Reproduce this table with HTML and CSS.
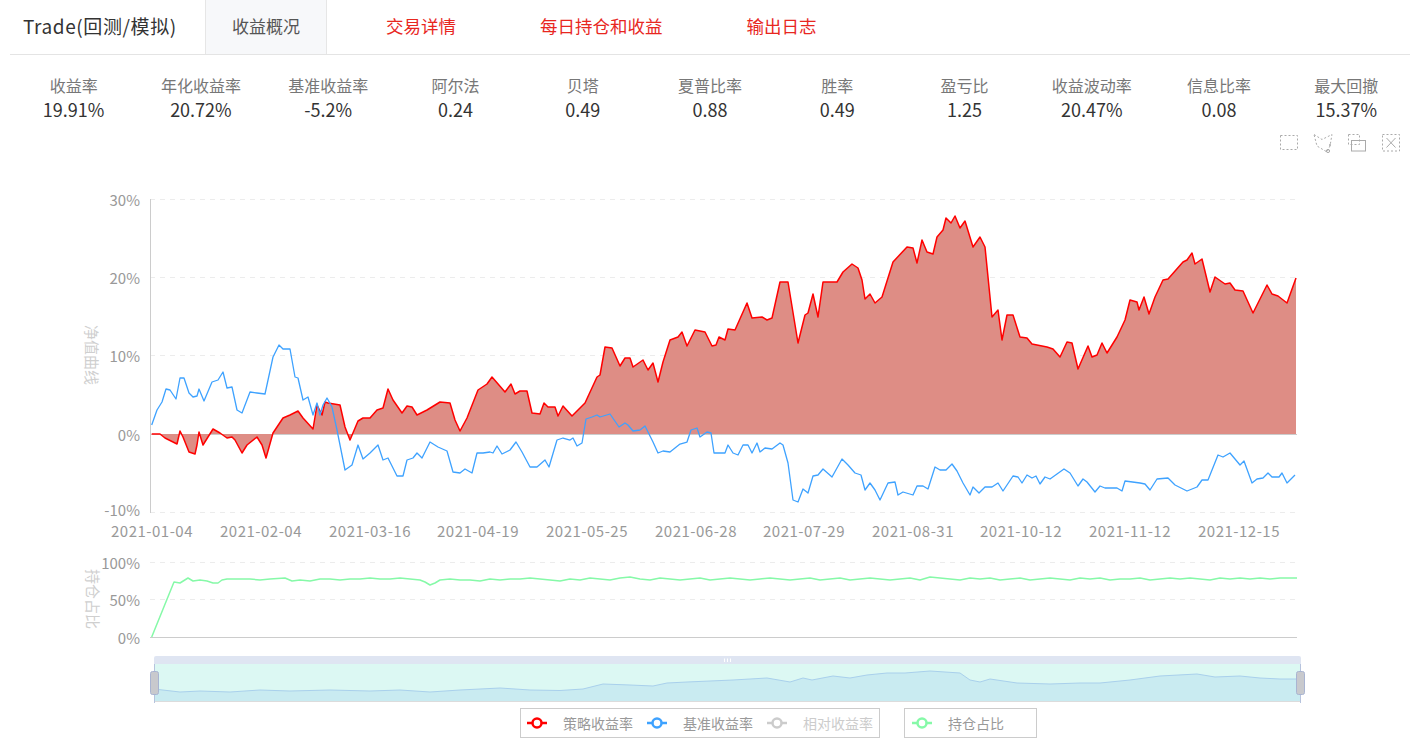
FILE: index.html
```html
<!DOCTYPE html>
<html lang="zh-CN">
<head>
<meta charset="utf-8">
<title>Trade(回测/模拟)</title>
<link rel="stylesheet" href="styles.css">
</head>
<body>
<div class="tabs">
  <div class="tab tab-title">Trade(回测/模拟)</div>
  <div class="tab tab-active">收益概况</div>
  <div class="tab tab-link tab-first">交易详情</div>
  <div class="tab tab-link">每日持仓和收益</div>
  <div class="tab tab-link">输出日志</div>
</div>

<div class="metrics">
  <div class="metric"><div class="m-label">收益率</div><div class="m-value">19.91%</div></div>
  <div class="metric"><div class="m-label">年化收益率</div><div class="m-value">20.72%</div></div>
  <div class="metric"><div class="m-label">基准收益率</div><div class="m-value">-5.2%</div></div>
  <div class="metric"><div class="m-label">阿尔法</div><div class="m-value">0.24</div></div>
  <div class="metric"><div class="m-label">贝塔</div><div class="m-value">0.49</div></div>
  <div class="metric"><div class="m-label">夏普比率</div><div class="m-value">0.88</div></div>
  <div class="metric"><div class="m-label">胜率</div><div class="m-value">0.49</div></div>
  <div class="metric"><div class="m-label">盈亏比</div><div class="m-value">1.25</div></div>
  <div class="metric"><div class="m-label">收益波动率</div><div class="m-value">20.47%</div></div>
  <div class="metric"><div class="m-label">信息比率</div><div class="m-value">0.08</div></div>
  <div class="metric"><div class="m-label">最大回撤</div><div class="m-value">15.37%</div></div>
</div>

<div class="toolbox">
  <svg class="tool" viewBox="0 0 20 20"><rect x="1.5" y="2.5" width="17" height="14" fill="none" stroke="#aaa" stroke-dasharray="2 2"/></svg>
  <svg class="tool" viewBox="0 0 20 20"><path d="M1 1.5 L9 6.5 L19 1.5 L17 13 L14 19 L4 13 Z" fill="none" stroke="#aaa" stroke-dasharray="2 2"/><circle cx="15" cy="18" r="1.6" fill="none" stroke="#aaa"/><circle cx="17" cy="12" r="1" fill="#aaa"/></svg>
  <svg class="tool" viewBox="0 0 20 20"><rect x="1.5" y="1.5" width="11" height="10" fill="none" stroke="#aaa" stroke-dasharray="2 2"/><rect x="4.5" y="7.5" width="14" height="10.5" fill="none" stroke="#aaa"/></svg>
  <svg class="tool" viewBox="0 0 20 20"><rect x="1.5" y="1.5" width="17" height="16.5" fill="none" stroke="#aaa" stroke-dasharray="2 2"/><path d="M5.5 5 L14.5 14.5 M14.5 5 L5.5 14.5" stroke="#aaa" fill="none"/></svg>
</div>

<svg class="chart" width="1410" height="552" viewBox="0 153 1410 552">
  <g class="grid">
    <line x1="150" y1="199.5" x2="1297" y2="199.5"/>
    <line x1="150" y1="277.5" x2="1297" y2="277.5"/>
    <line x1="150" y1="355.5" x2="1297" y2="355.5"/>
    <line x1="150" y1="512.5" x2="1297" y2="512.5"/>
    <line x1="150" y1="562.5" x2="1297" y2="562.5"/>
    <line x1="150" y1="599.5" x2="1297" y2="599.5"/>
  </g>
  <g class="axis">
    <line x1="150.5" y1="199" x2="150.5" y2="513"/>
    <line x1="150" y1="434.5" x2="1297" y2="434.5"/>
    <line x1="150" y1="637.5" x2="1297" y2="637.5"/>
  </g>
  <g class="ylabels">
    <text x="140" y="199">30%</text>
    <text x="140" y="277">20%</text>
    <text x="140" y="355">10%</text>
    <text x="140" y="434">0%</text>
    <text x="140" y="509.5">-10%</text>
    <text x="140" y="562">100%</text>
    <text x="140" y="599">50%</text>
    <text x="140" y="637">0%</text>
  </g>
  <text class="axis-name" transform="translate(92 355) rotate(90)">净值曲线</text>
  <text class="axis-name" transform="translate(93 599) rotate(90)">持仓占比</text>
  <g class="xlabels">
    <text x="152" y="530">2021-01-04</text>
    <text x="261" y="530">2021-02-04</text>
    <text x="370" y="530">2021-03-16</text>
    <text x="478" y="530">2021-04-19</text>
    <text x="587" y="530">2021-05-25</text>
    <text x="696" y="530">2021-06-28</text>
    <text x="804" y="530">2021-07-29</text>
    <text x="913" y="530">2021-08-31</text>
    <text x="1021" y="530">2021-10-12</text>
    <text x="1130" y="530">2021-11-12</text>
    <text x="1239" y="530">2021-12-15</text>
  </g>

  <polygon class="strat-area" points="151.7,434 160,434 165,438 175,443 177,444 180,431 183,437 189,452 195,454 197,445 199,432 203,445 208,437 213,429 220,433 227,438 232,437 235,440 242,453 247,445 257,437 262,445 266,458 273,433 283,418 290,415 298,411 303,418 313,429 317,405 322,415 325,402 328,403 340,405 345,427 350,440 358,421 363,418 370,418 377,410 383,408 388,389 393,400 402,413 407,406 412,407 417,415 427,410 440,402 450,403 455,420 460,431 467,418 478,390 487,384 492,377 505,392 511,384 515,394 520,391 527,391 532,413 540,414 544,403 548,407 555,407 558,416 563,406 572,416 585,403 597,377 600,375 605,347 612,348 620,366 625,358 630,358 633,367 643,360 648,370 653,363 658,382 663,362 670,340 678,337 682,332 687,346 695,330 705,332 712,346 716,345 719,337 725,340 728,329 735,330 747,303 752,318 762,317 767,320 772,318 780,282 788,282 798,343 805,315 808,313 813,294 818,317 823,282 837,282 843,272 852,264 858,268 862,280 865,299 870,294 875,303 882,297 893,262 907,247 913,248 917,263 922,240 927,252 933,254 937,237 943,230 946,218 951,223 955,216 960,228 965,221 973,247 980,237 985,247 992,317 998,310 1002,340 1007,315 1013,315 1020,337 1027,338 1032,344 1047,347 1053,349 1060,357 1067,342 1072,343 1078,369 1088,346 1092,357 1097,355 1102,343 1107,353 1117,337 1125,320 1130,300 1137,302 1139,310 1144,297 1149,314 1155,297 1163,280 1168,279 1183,262 1187,260 1192,253 1195,264 1202,259 1210,292 1215,277 1225,284 1230,283 1235,290 1243,291 1253,313 1267,285 1272,294 1278,296 1287,303 1296,278 1296,434"/>
  <polyline class="strat-line" points="151.7,434 160,434 165,438 175,443 177,444 180,431 183,437 189,452 195,454 197,445 199,432 203,445 208,437 213,429 220,433 227,438 232,437 235,440 242,453 247,445 257,437 262,445 266,458 273,433 283,418 290,415 298,411 303,418 313,429 317,405 322,415 325,402 328,403 340,405 345,427 350,440 358,421 363,418 370,418 377,410 383,408 388,389 393,400 402,413 407,406 412,407 417,415 427,410 440,402 450,403 455,420 460,431 467,418 478,390 487,384 492,377 505,392 511,384 515,394 520,391 527,391 532,413 540,414 544,403 548,407 555,407 558,416 563,406 572,416 585,403 597,377 600,375 605,347 612,348 620,366 625,358 630,358 633,367 643,360 648,370 653,363 658,382 663,362 670,340 678,337 682,332 687,346 695,330 705,332 712,346 716,345 719,337 725,340 728,329 735,330 747,303 752,318 762,317 767,320 772,318 780,282 788,282 798,343 805,315 808,313 813,294 818,317 823,282 837,282 843,272 852,264 858,268 862,280 865,299 870,294 875,303 882,297 893,262 907,247 913,248 917,263 922,240 927,252 933,254 937,237 943,230 946,218 951,223 955,216 960,228 965,221 973,247 980,237 985,247 992,317 998,310 1002,340 1007,315 1013,315 1020,337 1027,338 1032,344 1047,347 1053,349 1060,357 1067,342 1072,343 1078,369 1088,346 1092,357 1097,355 1102,343 1107,353 1117,337 1125,320 1130,300 1137,302 1139,310 1144,297 1149,314 1155,297 1163,280 1168,279 1183,262 1187,260 1192,253 1195,264 1202,259 1210,292 1215,277 1225,284 1230,283 1235,290 1243,291 1253,313 1267,285 1272,294 1278,296 1287,303 1296,278"/>
  <polyline class="bench-line" points="151.7,425 157,410 162,402 166,389 170,390 176,399 180,378 184,378 189,393 193,397 197,396 199,389 204,401 212,382 218,380 223,372 227,388 232,387 237,410 242,413 250,392 257,393 265,394 273,357 279,345 283,349 290,349 295,377 298,378 303,400 308,397 313,415 317,403 320,415 323,405 327,398 332,407 337,430 345,470 352,465 358,445 363,459 370,453 378,445 383,460 388,458 397,476 403,476 407,460 413,458 417,453 422,458 430,442 438,447 447,451 453,472 460,473 465,469 472,473 477,453 483,453 490,452 493,453 497,446 502,454 510,450 516,442 522,452 530,467 537,467 545,460 549,467 557,440 563,438 570,440 573,438 577,446 582,443 586,419 592,417 597,415 600,417 610,414 619,427 625,423 628,425 633,431 640,430 645,426 653,442 658,453 663,451 670,452 680,444 687,442 691,430 697,428 700,437 707,432 711,433 714,453 725,453 728,445 733,453 738,455 743,445 748,445 752,453 757,443 760,452 765,448 772,449 780,443 783,445 788,463 793,500 798,502 803,489 808,493 813,476 818,475 823,469 832,477 842,459 848,465 855,473 861,475 865,490 870,483 875,490 880,500 888,483 895,482 898,495 903,492 913,495 917,486 923,486 928,489 935,467 940,470 946,470 952,464 957,471 963,483 970,495 973,487 979,493 985,487 992,487 998,483 1003,491 1013,476 1018,477 1022,483 1027,475 1032,478 1036,476 1040,484 1045,477 1050,479 1064,469 1070,473 1078,486 1083,479 1087,482 1095,492 1100,486 1105,488 1117,488 1122,491 1125,481 1140,483 1145,484 1150,490 1157,479 1168,478 1175,485 1187,491 1197,487 1202,480 1208,480 1218,455 1223,457 1230,453 1240,465 1244,461 1252,483 1257,479 1263,478 1268,473 1272,477 1279,477 1282,473 1287,483 1295,475"/>

  <polyline class="pos-line" points="151.7,637 174,582 180,583 188,578 193,581 200,580 207,581 213,583 218,583 222,580 227,579 240,579 250,579 260,580 270,579 285,578 292,581 300,580 310,581 320,579 330,579 340,580 350,579 360,579 370,578 380,579 390,579 400,578 410,579 420,580 425,582 430,585 435,583 440,580 450,579 460,580 470,580 480,581 490,579 500,580 510,579 520,579 530,578 540,579 550,580 560,581 570,579 580,580 590,578 600,579 610,580 620,578 630,577 640,579 650,580 660,578 670,579 680,580 690,579 700,578 710,580 720,579 730,578 740,579 750,580 760,579 770,578 780,579 790,580 800,579 810,578 820,580 830,579 840,578 850,580 860,579 870,578 880,579 890,580 900,579 910,578 920,580 930,577 940,578 950,579 960,580 970,578 980,579 990,578 1000,580 1010,579 1020,578 1030,580 1040,579 1050,578 1060,579 1070,580 1080,578 1090,579 1100,578 1110,580 1120,579 1130,579 1140,578 1150,580 1160,579 1170,578 1180,579 1190,578 1200,579 1210,580 1220,578 1230,579 1240,578 1250,579 1260,578 1270,579 1280,578 1297,578"/>

  <path class="dz-bar" d="M154 664 L154 658 Q154 656 156 656 L1299 656 Q1301 656 1301 658 L1301 664 Z"/>
  <rect class="dz-sel" x="154" y="664" width="1147" height="37"/>
  <polygon class="dz-area" points="154,689 180,692 200,691 230,692 260,690 290,691 330,690 370,691 400,690 430,692 460,690 500,688 530,690 560,690.5 583,689 603,684 630,685 653,686 667,683 687,682 710,681 733,680 767,678 790,682 803,678 812,680 833,676 850,678 867,675 887,673 905,673 930,671 960,673 970,680 980,682 990,679 1017,683 1050,684 1080,683 1100,683 1130,680 1160,676 1197,674 1215,677 1240,676 1260,678 1280,679 1301,679 1301,701 154,701"/>
  <polyline class="dz-line" points="154,689 180,692 200,691 230,692 260,690 290,691 330,690 370,691 400,690 430,692 460,690 500,688 530,690 560,690.5 583,689 603,684 630,685 653,686 667,683 687,682 710,681 733,680 767,678 790,682 803,678 812,680 833,676 850,678 867,675 887,673 905,673 930,671 960,673 970,680 980,682 990,679 1017,683 1050,684 1080,683 1100,683 1130,680 1160,676 1197,674 1215,677 1240,676 1260,678 1280,679 1301,679"/>
  <line class="dz-bottom" x1="154" y1="701.5" x2="1301" y2="701.5"/>
  <line class="dz-edge" x1="154.5" y1="664" x2="154.5" y2="703"/>
  <line class="dz-edge" x1="1300.5" y1="664" x2="1300.5" y2="703"/>
  <rect class="dz-handle" x="150.5" y="671.5" width="8" height="23" rx="2"/>
  <rect class="dz-handle" x="1296.5" y="671.5" width="8" height="23" rx="2"/>
  <g class="dz-grip">
    <line x1="724.5" y1="658.5" x2="724.5" y2="662"/>
    <line x1="727.5" y1="658.5" x2="727.5" y2="662"/>
    <line x1="730.5" y1="658.5" x2="730.5" y2="662"/>
  </g>
</svg>

<div class="legend">
  <div class="legend-box legend-main">
    <div class="legend-item">
      <svg class="l-icon" viewBox="0 0 20 14"><line x1="0" y1="7" x2="20" y2="7" stroke="#ff0000" stroke-width="2.5"/><circle cx="10" cy="7" r="4.5" fill="#fff" stroke="#ff0000" stroke-width="2.5"/></svg>
      <span class="l-text">策略收益率</span>
    </div>
    <div class="legend-item">
      <svg class="l-icon" viewBox="0 0 20 14"><line x1="0" y1="7" x2="20" y2="7" stroke="#3ea2ff" stroke-width="2.5"/><circle cx="10" cy="7" r="4.5" fill="#fff" stroke="#3ea2ff" stroke-width="2.5"/></svg>
      <span class="l-text">基准收益率</span>
    </div>
    <div class="legend-item">
      <svg class="l-icon" viewBox="0 0 20 14"><line x1="0" y1="7" x2="20" y2="7" stroke="#cccccc" stroke-width="2.5"/><circle cx="10" cy="7" r="4.5" fill="#fff" stroke="#cccccc" stroke-width="2.5"/></svg>
      <span class="l-text l-off">相对收益率</span>
    </div>
  </div>
  <div class="legend-box legend-pos">
    <div class="legend-item">
      <svg class="l-icon" viewBox="0 0 20 14"><line x1="0" y1="7" x2="20" y2="7" stroke="#86f9a8" stroke-width="2.5"/><circle cx="10" cy="7" r="4.5" fill="#fff" stroke="#86f9a8" stroke-width="2.5"/></svg>
      <span class="l-text">持仓占比</span>
    </div>
  </div>
</div>
</body>
</html>
```

FILE: styles.css
```css
* { box-sizing: border-box; }

body {
  margin: 0;
  background: #fff;
  font-family: "Noto Sans CJK SC", "Noto Sans", sans-serif;
  color: #333;
  width: 1410px;
  overflow: hidden;
}

.tabs {
  display: flex;
  height: 55px;
  margin-left: 10px;
  border-bottom: 1px solid #e4e4e4;
}

.tab {
  display: flex;
  align-items: center;
  padding-bottom: 4px;
  font-size: 17.5px;
  white-space: nowrap;
}

.tab-title {
  width: 195px;
  padding-left: 13px;
  font-size: 19px;
  letter-spacing: 0.6px;
  color: #333;
}

.tab-active {
  width: 122px;
  justify-content: center;
  background: #f7f8fa;
  border-left: 1px solid #e6e6e6;
  border-right: 1px solid #e6e6e6;
  color: #555;
  font-size: 17px;
}

.tab-link {
  padding: 0 42px 4px;
  color: #e8271f;
}

.tab-first { margin-left: 17px; }

.metrics {
  display: grid;
  grid-template-columns: repeat(11, 1fr);
  margin: 18px 0 0 10px;
}

.metric {
  text-align: center;
}

.m-label {
  font-size: 16px;
  line-height: 24px;
  color: #777;
}

.m-value {
  font-size: 18px;
  line-height: 24px;
  color: #333;
}

.toolbox {
  display: flex;
  justify-content: flex-end;
  gap: 14px;
  height: 20px;
  margin-top: 12px;
  padding-right: 9px;
}

.tool {
  width: 20px;
  height: 20px;
  display: block;
}

.chart {
  display: block;
}

.grid line {
  stroke: #ececec;
  stroke-width: 1;
  stroke-dasharray: 5 5;
}

.axis line {
  stroke: #cccccc;
  stroke-width: 1;
}

.ylabels text {
  font-size: 15px;
  fill: #999;
  text-anchor: end;
  dominant-baseline: central;
}

.xlabels text {
  font-size: 15px;
  letter-spacing: 0.5px;
  fill: #999;
  text-anchor: middle;
  dominant-baseline: central;
}

.axis-name {
  font-size: 15px;
  fill: #cfcfcf;
  text-anchor: middle;
  dominant-baseline: central;
}

.strat-area {
  fill: #de8d85;
  stroke: none;
}

.strat-line {
  fill: none;
  stroke: #ff0000;
  stroke-width: 1.5;
  stroke-linejoin: round;
}

.bench-line {
  fill: none;
  stroke: #3ea2ff;
  stroke-width: 1.3;
  stroke-linejoin: round;
}

.pos-line {
  fill: none;
  stroke: #86f9a8;
  stroke-width: 1.5;
  stroke-linejoin: round;
}

.dz-bar { fill: #dfe5f2; }
.dz-sel { fill: #dcf8f3; }
.dz-area { fill: #c9ebf1; }
.dz-line {
  fill: none;
  stroke: #a9d0ec;
  stroke-width: 1;
}
.dz-bottom { stroke: #dcdcdc; }
.dz-edge { stroke: #b6c3dd; }
.dz-handle {
  fill: #c8c9cd;
  stroke: #a9b4d2;
  stroke-width: 1;
}
.dz-grip line {
  stroke: #fff;
  stroke-width: 1;
}

.legend {
  display: flex;
  gap: 24px;
  margin: 3px 0 0 520px;
}

.legend-box {
  display: flex;
  align-items: center;
  height: 30px;
  border: 1px solid #cccccc;
  padding-left: 6px;
}

.legend-main { width: 360px; gap: 14px; }
.legend-pos { width: 133px; padding-left: 7px; }

.legend-item {
  display: flex;
  align-items: center;
  gap: 16px;
}

.l-icon {
  width: 20px;
  height: 14px;
  display: block;
}

.l-text {
  font-size: 14px;
  color: #999;
  line-height: 20px;
}

.l-off { color: #ccc; }
```
